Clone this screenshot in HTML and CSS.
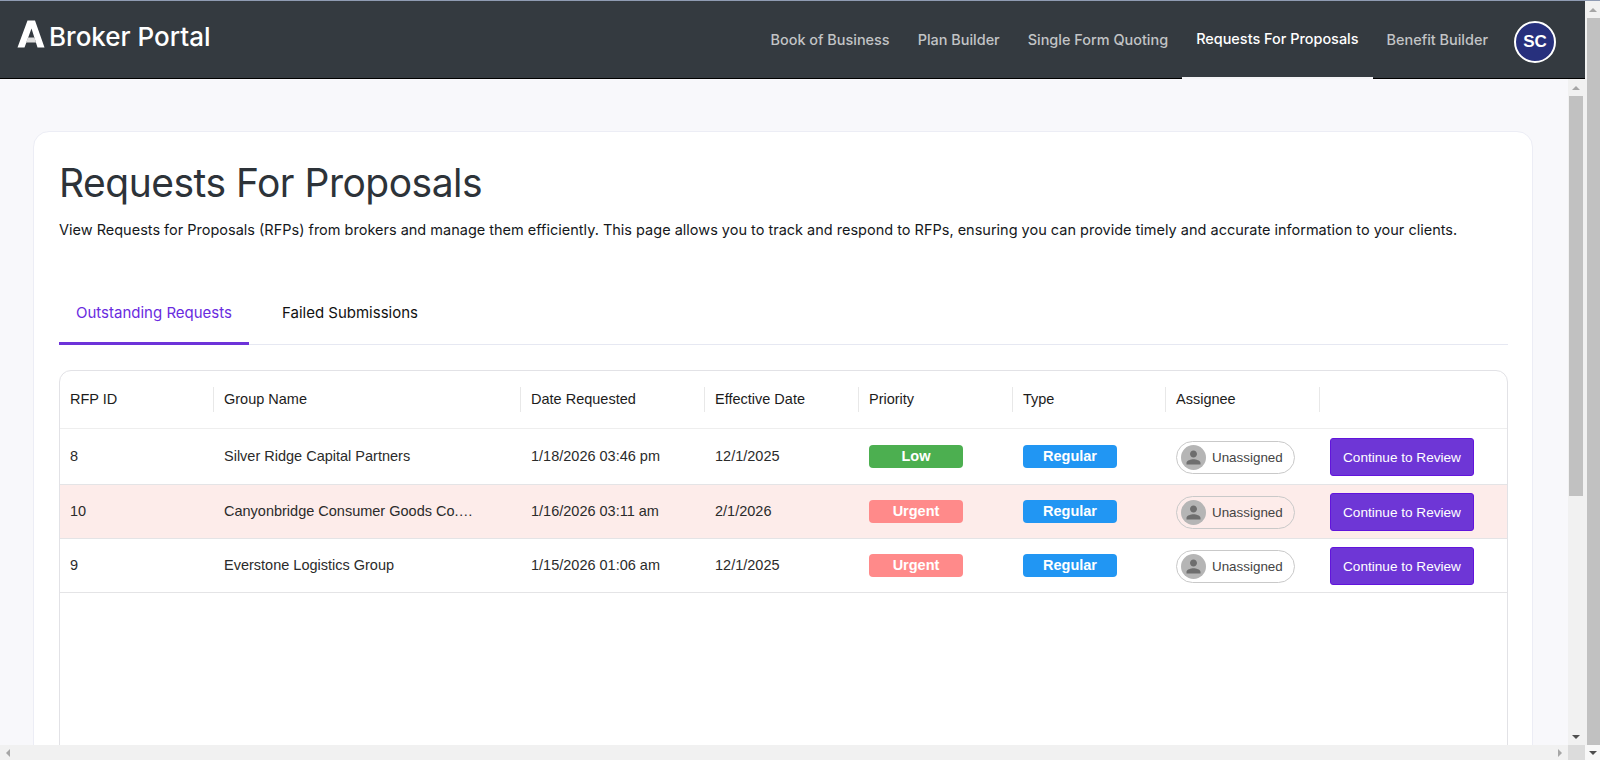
FILE: index.html
```html
<!DOCTYPE html>
<html lang="en">
<head>
<meta charset="utf-8">
<title>Requests For Proposals</title>
<link rel="stylesheet" href="styles.css">
</head>
<body>
<div class="window">
  <div class="main">
    <header class="topbar">
      <a class="brand">
        <svg class="logo" viewBox="0 0 28 28" width="28" height="28">
          <path class="logo-a" d="M10.5 0.5H18L27.5 27.5H20.5L14.5 8.5L7.5 27.5H0.5Z"/>
          <path class="logo-bar" d="M11 17.5H17.5L19 22.5H9Z"/>
        </svg>
        <span class="brand-name">Broker Portal</span>
      </a>
      <nav class="nav">
        <a class="nav-item">Book of Business</a>
        <a class="nav-item">Plan Builder</a>
        <a class="nav-item">Single Form Quoting</a>
        <a class="nav-item active">Requests For Proposals</a>
        <a class="nav-item">Benefit Builder</a>
      </nav>
      <div class="avatar">SC</div>
    </header>
    <div class="content-row">
      <main class="pane">
        <section class="card">
          <h1 class="title">Requests For Proposals</h1>
          <p class="lead">View Requests for Proposals (RFPs) from brokers and manage them efficiently. This page allows you to track and respond to RFPs, ensuring you can provide timely and accurate information to your clients.</p>
          <div class="tabs">
            <button class="tab selected">Outstanding Requests</button>
            <button class="tab">Failed Submissions</button>
          </div>
          <div class="grid">
            <div class="row head">
              <div class="cell">RFP ID</div>
              <div class="cell">Group Name</div>
              <div class="cell">Date Requested</div>
              <div class="cell">Effective Date</div>
              <div class="cell">Priority</div>
              <div class="cell">Type</div>
              <div class="cell">Assignee</div>
              <div class="cell"></div>
            </div>
            <div class="row tall">
              <div class="cell">8</div>
              <div class="cell">Silver Ridge Capital Partners</div>
              <div class="cell">1/18/2026 03:46 pm</div>
              <div class="cell">12/1/2025</div>
              <div class="cell"><span class="badge low">Low</span></div>
              <div class="cell"><span class="badge regular">Regular</span></div>
              <div class="cell"><span class="assignee"><span class="face"><svg viewBox="0 0 24 24" width="21" height="21"><path d="M12 12c2.21 0 4-1.79 4-4s-1.79-4-4-4-4 1.79-4 4 1.79 4 4 4zm0 2c-2.67 0-8 1.34-8 4v2h16v-2c0-2.66-5.33-4-8-4z"/></svg></span>Unassigned</span></div>
              <div class="cell"><button class="review">Continue to Review</button></div>
            </div>
            <div class="row alert">
              <div class="cell">10</div>
              <div class="cell"><span class="clip">Canyonbridge Consumer Goods Co.…</span></div>
              <div class="cell">1/16/2026 03:11 am</div>
              <div class="cell">2/1/2026</div>
              <div class="cell"><span class="badge urgent">Urgent</span></div>
              <div class="cell"><span class="badge regular">Regular</span></div>
              <div class="cell"><span class="assignee"><span class="face"><svg viewBox="0 0 24 24" width="21" height="21"><path d="M12 12c2.21 0 4-1.79 4-4s-1.79-4-4-4-4 1.79-4 4 1.79 4 4 4zm0 2c-2.67 0-8 1.34-8 4v2h16v-2c0-2.66-5.33-4-8-4z"/></svg></span>Unassigned</span></div>
              <div class="cell"><button class="review">Continue to Review</button></div>
            </div>
            <div class="row">
              <div class="cell">9</div>
              <div class="cell">Everstone Logistics Group</div>
              <div class="cell">1/15/2026 01:06 am</div>
              <div class="cell">12/1/2025</div>
              <div class="cell"><span class="badge urgent">Urgent</span></div>
              <div class="cell"><span class="badge regular">Regular</span></div>
              <div class="cell"><span class="assignee"><span class="face"><svg viewBox="0 0 24 24" width="21" height="21"><path d="M12 12c2.21 0 4-1.79 4-4s-1.79-4-4-4-4 1.79-4 4 1.79 4 4 4zm0 2c-2.67 0-8 1.34-8 4v2h16v-2c0-2.66-5.33-4-8-4z"/></svg></span>Unassigned</span></div>
              <div class="cell"><button class="review">Continue to Review</button></div>
            </div>
          </div>
        </section>
      </main>
      <div class="vbar inner">
        <div class="sb-btn"><span class="arrow up light"></span></div>
        <div class="thumb inner-thumb"></div>
        <div class="sb-fill"></div>
        <div class="sb-btn"><span class="arrow down"></span></div>
      </div>
    </div>
    <div class="hbar">
      <div class="hbar-track">
        <span class="arrow left"></span>
        <span class="arrow right"></span>
      </div>
      <div class="corner"></div>
    </div>
  </div>
  <div class="vbar outer">
    <div class="sb-btn tall"><span class="arrow up light"></span></div>
    <div class="thumb outer-thumb"></div>
    <div class="sb-btn white"><span class="arrow down"></span></div>
  </div>
</div>
</body>
</html>
```
FILE: styles.css
```css
* { box-sizing: border-box; }
html, body { margin: 0; height: 100%; overflow: hidden; }
body { font-family: "Liberation Sans", Arial, sans-serif; border-top: 1px solid #8f9bb3; background: #f8f8fb; }
.window { display: flex; height: 759px; width: 1600px; }
.main { flex: 1; display: flex; flex-direction: column; min-width: 0; }

.topbar { height: 78px; flex: none; background: #343a40; border-bottom: 1px solid #000; display: flex; align-items: stretch; padding-right: 29px; }
.brand { display: flex; align-items: center; padding: 0 0 6px 17px; color: #fff; margin-right: auto; }
.logo { display: block; margin-right: 4px; margin-top: -6px; }
.logo-a { fill: #fff; }
.logo-bar { fill: #dedede; }
.brand-name { font-family: Inter, sans-serif; font-size: 26px; font-weight: 500; }
.nav { display: flex; align-items: stretch; }
.nav-item { display: flex; align-items: center; padding: 0 14px; font-family: Inter, sans-serif; font-size: 14.45px; font-weight: 500; color: #c2c4c6; }
.nav-item.active { color: #fff; padding-bottom: 2px; position: relative; }
.nav-item.active::after { content: ""; position: absolute; left: 0; right: 0; bottom: -1px; height: 2px; background: #f4f4f6; }
.avatar { align-self: center; width: 42px; height: 42px; margin: 4px 0 0 12px; border-radius: 50%; border: 2px solid #fff; background: #27307d; color: #fff; font-family: "Liberation Sans", sans-serif; font-weight: 700; font-size: 17px; display: flex; align-items: center; justify-content: center; }

.content-row { flex: 1; display: flex; min-height: 0; }
.pane { flex: 1; min-width: 0; overflow: hidden; padding: 52px 35px 0 33px; background: #f8f8fb; }
.card { height: 900px; background: #fff; border: 1px solid #ecedf5; border-radius: 16px; padding: 0 24px 0 25px; }
.title { margin: 0; padding-top: 25px; font-family: Inter, sans-serif; font-size: 39px; line-height: 52px; font-weight: 400; color: #2d3339; letter-spacing: -0.5px; }
.lead { margin: 11px 0 0; font-family: Inter, sans-serif; font-size: 14.5px; line-height: 20px; color: #15181b; }

.tabs { display: flex; gap: 16px; margin-top: 42px; height: 63px; border-bottom: 1px solid #e6e8f2; }
.tab { height: 63px; padding: 0 17px 3px; border: 0; background: none; font-family: Inter, sans-serif; font-size: 15px; color: #111; }
.tab.selected { color: #6a2be0; border-bottom: 3px solid #6d33d9; padding-bottom: 0; }

.grid { margin-top: 25px; height: 500px; border: 1px solid #e2e2e6; border-radius: 12px 12px 0 0; }
.row { display: grid; grid-template-columns: 153px 307px 184px 154px 154px 153px 154px 1fr; height: 54px; border-bottom: 1px solid #e4e4e6; font-size: 14.5px; color: #2b2b2b; }
.row.head { height: 58px; color: #1c1c1c; border-bottom-color: #eeeeee; }
.row.tall { height: 56px; }
.row.alert { background: #fdecea; }
.cell { display: flex; align-items: center; padding: 0 0 2px 11px; white-space: nowrap; min-width: 0; }
.cell:first-child { padding-left: 10px; }
.row.head .cell { position: relative; padding-bottom: 1px; }
.row.head .cell + .cell::before { content: ""; position: absolute; left: 0; top: 16px; height: 25px; width: 1px; background: #e8e8e8; }
.clip { overflow: hidden; text-overflow: ellipsis; }
.badge { width: 94px; height: 23px; margin-top: 1px; border-radius: 4px; display: flex; align-items: center; justify-content: center; color: #fff; font-weight: 700; font-size: 14.5px; }
.low { background: #4caf50; }
.regular { background: #2196f3; }
.urgent { background: #ff8a8a; }
.assignee { display: flex; align-items: center; width: 119px; height: 33px; margin-top: 3px; padding-left: 4px; border: 1px solid #c9c9c9; border-radius: 17px; font-size: 13.4px; color: #444; }
.face { width: 25px; height: 25px; margin-right: 6px; border-radius: 50%; background: #b5b5b5; display: flex; align-items: center; justify-content: center; }
.face svg { fill: #6e6e6e; }
.review { width: 144px; height: 38px; margin-top: 3px; padding: 0; border: 1px solid #6214dc; border-radius: 3px; background: #6e36d6; color: #fff; font-family: "Liberation Sans", sans-serif; font-size: 13.6px; }

.vbar { display: flex; flex-direction: column; flex: none; background: #f1f1f1; }
.vbar.outer { width: 15px; }
.vbar.inner { width: 17px; padding-right: 2px; }
.sb-btn { height: 17px; flex: none; display: flex; align-items: center; justify-content: center; }
.sb-btn.white { height: 15px; background: #f8f8f8; }
.thumb { background: #c1c1c1; flex: none; margin-left: 2px; }
.inner-thumb { height: 400px; margin-left: 1px; }
.outer-thumb { flex: 1; }
.sb-fill { flex: 1; }
.arrow { width: 0; height: 0; display: block; border-style: solid; border-color: transparent; }
.arrow.up { border-width: 0 4px 4px; border-bottom-color: #a6a6a6; }
.arrow.down { border-width: 4px 4px 0; border-top-color: #4f4f4f; }
.arrow.left { border-width: 4px 4px 4px 0; border-right-color: #a6a6a6; }
.arrow.right { border-width: 4px 0 4px 4px; border-left-color: #a6a6a6; }
.hbar { height: 15px; flex: none; display: flex; }
.hbar-track { flex: 1; background: #f1f1f1; display: flex; align-items: center; justify-content: space-between; padding: 0 6px; }
.corner { width: 17px; background: #dcdcdc; }
```
